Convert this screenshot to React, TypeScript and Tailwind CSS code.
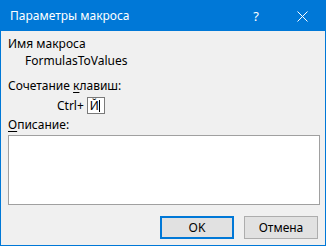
const App = () => {
  return (
    <div
      className="w-[326px] h-[246px] flex flex-col border border-[#0078d7] bg-[#f0f0f0] text-[12px] leading-[16px] text-black overflow-hidden"
      style={{ fontFamily: '"Noto Sans", "Open Sans", sans-serif' }}
    >
      {/* Title bar */}
      <div className="h-[30px] bg-[#0078d7] flex items-center text-white shrink-0">
        <span className="pl-[9px] flex-1">Параметры макроса</span>
        <span className="w-[46px] text-center text-[13px]">?</span>
        <span className="w-[46px] flex justify-center">
          <svg width="11" height="11" viewBox="0 0 11 11">
            <path d="M0.5 0.5L10.5 10.5M10.5 0.5L0.5 10.5" stroke="white" strokeWidth="1" />
          </svg>
        </span>
      </div>

      <div className="flex-1 flex flex-col px-[6px] pt-[5px]">
        <div className="h-[16px] pl-[1px]">Имя макроса</div>
        <div className="h-[16px] pl-[18px] mt-[1px]">FormulasToValues</div>

        <div className="h-[16px] pl-[1px] mt-[9px]">
          Сочетание <span className="underline underline-offset-2">к</span>лавиш:
        </div>
        <div className="h-[17px] flex items-center mt-[3px] pl-[50px]">
          <span>Ctrl+</span>
          <div className="ml-[3px] w-[18px] h-[17px] border border-[#7a7a7a] bg-white flex items-center pl-[2px]">
            <span className="leading-[14px]">Й</span>
            <span className="w-px h-[12px] bg-black" />
          </div>
        </div>

        <div className="h-[16px] pl-[1px] mt-[3px]">
          <span className="underline underline-offset-2">О</span>писание:
        </div>
        <div className="mt-[2px] ml-[1px] w-[312px] h-[70px] shrink-0 border border-[#a0a0a0] bg-white" />

        <div className="flex justify-end gap-[10px] mt-[11px] pr-[1px]">
          <button className="w-[74px] h-[23px] border-2 border-[#0078d7] bg-[#e1e1e1] leading-none">OK</button>
          <button className="w-[74px] h-[23px] border border-[#adadad] bg-[#e1e1e1] leading-none">Отмена</button>
        </div>
      </div>
    </div>
  );
};

export default App;
